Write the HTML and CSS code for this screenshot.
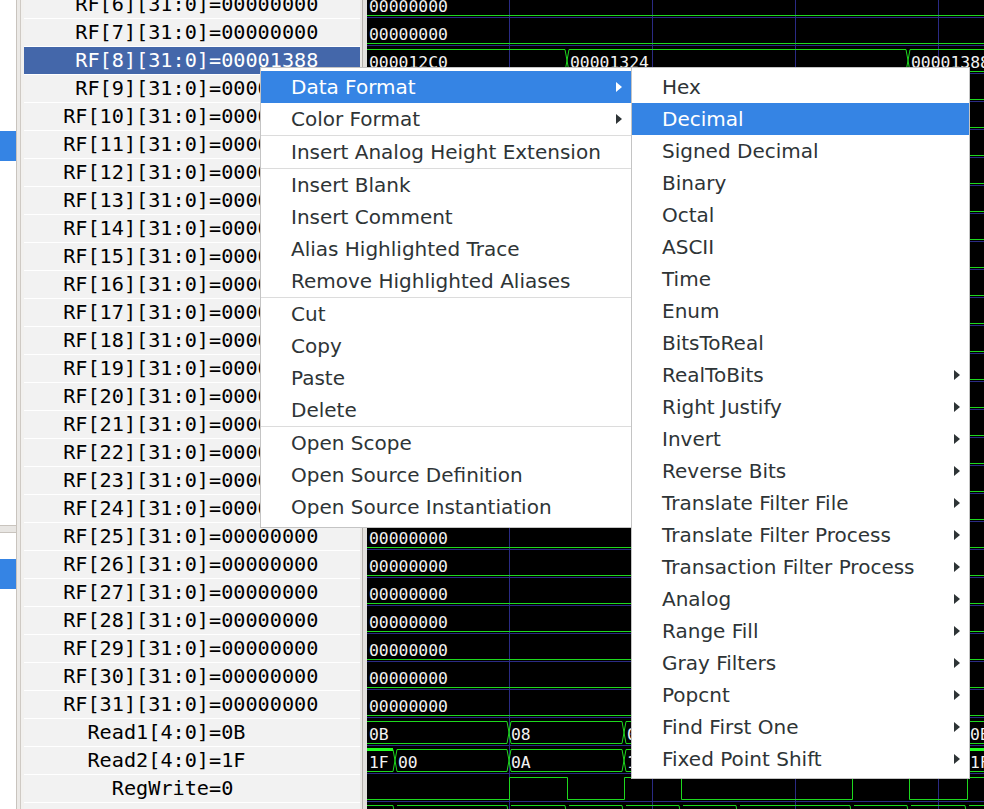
FILE: index.html
```html
<!DOCTYPE html>
<html>
<head>
<meta charset="utf-8">
<link rel="stylesheet" href="styles.css">
</head>
<body>
<div class="app">
  <div class="side">
    <div class="pane pane-top"><div class="sel"></div></div>
    <div class="pane pane-bottom"><div class="sel"></div></div>
  </div>
  <div class="split-a"></div>
  <div class="signals">
    <div class="rows">
      <div class="row"><span class="name">RF[6][31:0]</span><span>=00000000</span></div>
      <div class="row"><span class="name">RF[7][31:0]</span><span>=00000000</span></div>
      <div class="row row-sel"><span class="name">RF[8][31:0]</span><span>=00001388</span></div>
      <div class="row"><span class="name">RF[9][31:0]</span><span>=00000000</span></div>
      <div class="row"><span class="name">RF[10][31:0]</span><span>=00000000</span></div>
      <div class="row"><span class="name">RF[11][31:0]</span><span>=00000000</span></div>
      <div class="row"><span class="name">RF[12][31:0]</span><span>=00000000</span></div>
      <div class="row"><span class="name">RF[13][31:0]</span><span>=00000000</span></div>
      <div class="row"><span class="name">RF[14][31:0]</span><span>=00000000</span></div>
      <div class="row"><span class="name">RF[15][31:0]</span><span>=00000000</span></div>
      <div class="row"><span class="name">RF[16][31:0]</span><span>=00000000</span></div>
      <div class="row"><span class="name">RF[17][31:0]</span><span>=00000000</span></div>
      <div class="row"><span class="name">RF[18][31:0]</span><span>=00000000</span></div>
      <div class="row"><span class="name">RF[19][31:0]</span><span>=00000000</span></div>
      <div class="row"><span class="name">RF[20][31:0]</span><span>=00000000</span></div>
      <div class="row"><span class="name">RF[21][31:0]</span><span>=00000000</span></div>
      <div class="row"><span class="name">RF[22][31:0]</span><span>=00000000</span></div>
      <div class="row"><span class="name">RF[23][31:0]</span><span>=00000000</span></div>
      <div class="row"><span class="name">RF[24][31:0]</span><span>=00000000</span></div>
      <div class="row"><span class="name">RF[25][31:0]</span><span>=00000000</span></div>
      <div class="row"><span class="name">RF[26][31:0]</span><span>=00000000</span></div>
      <div class="row"><span class="name">RF[27][31:0]</span><span>=00000000</span></div>
      <div class="row"><span class="name">RF[28][31:0]</span><span>=00000000</span></div>
      <div class="row"><span class="name">RF[29][31:0]</span><span>=00000000</span></div>
      <div class="row"><span class="name">RF[30][31:0]</span><span>=00000000</span></div>
      <div class="row"><span class="name">RF[31][31:0]</span><span>=00000000</span></div>
      <div class="row"><span class="name">Read1[4:0]</span><span>=0B</span></div>
      <div class="row"><span class="name">Read2[4:0]</span><span>=1F</span></div>
      <div class="row"><span class="name">RegWrite</span><span>=0</span></div>
      <div class="row"><span class="name"></span><span></span></div>
    </div>
  </div>
  <div class="split-b"></div>
  <div class="wave">
    <svg class="wave-svg" width="617" height="809" viewBox="0 0 617 809" xmlns="http://www.w3.org/2000/svg">
      <g class="grid">
        <path d="M142.5 0V809M285.5 0V809M428.5 0V809M571.5 0V809"/>
        <path d="M0 17.5H617M0 45.5H617M0 73.5H617M0 101.5H617M0 129.5H617M0 157.5H617M0 185.5H617M0 213.5H617M0 241.5H617M0 269.5H617M0 297.5H617M0 325.5H617M0 353.5H617M0 381.5H617M0 409.5H617M0 437.5H617M0 465.5H617M0 493.5H617M0 521.5H617M0 549.5H617M0 577.5H617M0 605.5H617M0 633.5H617M0 661.5H617M0 689.5H617M0 717.5H617M0 745.5H617M0 773.5H617M0 801.5H617"/>
      </g>
      <g class="trace">
        <path d="M0 15.5H617M0 43.5H617M0 99.5H617M0 127.5H617M0 155.5H617M0 183.5H617M0 211.5H617M0 239.5H617M0 267.5H617M0 295.5H617M0 323.5H617M0 351.5H617M0 379.5H617M0 407.5H617M0 435.5H617M0 463.5H617M0 491.5H617M0 519.5H617M0 547.5H617M0 575.5H617M0 603.5H617M0 631.5H617M0 659.5H617M0 687.5H617M0 715.5H617"/>
        <path d="M0 49.5H198M0 71.5H198M198 49.5L202 71.5M198 71.5L202 49.5M202 49.5H539M202 71.5H539M539 49.5L543 71.5M539 71.5L543 49.5M543 49.5H617M543 71.5H617"/>
        <path d="M0 721.5H140M0 743.5H140M140 721.5L144 743.5M140 743.5L144 721.5M144 721.5H255M144 743.5H255M255 721.5L259 743.5M255 743.5L259 721.5M259 721.5H598M259 743.5H598M598 721.5L602 743.5M598 743.5L602 721.5M602 721.5H617M602 743.5H617"/>
        <path d="M0 771.5H26M26 749.5L30 771.5M26 771.5L30 749.5M30 749.5H140M30 771.5H140M140 749.5L144 771.5M140 771.5L144 749.5M144 749.5H255M144 771.5H255M255 749.5L259 771.5M255 771.5L259 749.5M259 749.5H598M259 771.5H598M598 749.5L602 771.5M598 771.5L602 749.5M602 771.5H617"/>
        <path d="M0 799.5H142.5V777.5H200.5V799.5H257.5V777.5H314.5V799.5H485.5V777.5H542.5V799.5H600.5V777.5H617"/>
        <path d="M0 805.5H26M26 805.5L30 827.5M30 805.5H140M140 805.5L144 827.5M144 805.5H198M198 805.5L202 827.5M202 805.5H255M255 805.5L259 827.5M259 805.5H312M312 805.5L316 827.5M316 805.5H369M369 805.5L373 827.5M373 805.5H483M483 805.5L487 827.5M487 805.5H540M540 805.5L544 827.5M544 805.5H598M598 805.5L602 827.5M602 805.5H617"/>
      </g>
      <rect class="hi" x="0" y="748" width="26" height="3"/>
      <rect class="hi" x="602" y="748" width="15" height="3"/>
      <g class="vals">
        <text x="2" y="12">00000000</text>
        <text x="2" y="40">00000000</text>
        <text x="2" y="68">000012C0</text>
        <text x="203" y="68">00001324</text>
        <text x="544" y="68">00001388</text>
        <text x="2" y="544">00000000</text>
        <text x="2" y="572">00000000</text>
        <text x="2" y="600">00000000</text>
        <text x="2" y="628">00000000</text>
        <text x="2" y="656">00000000</text>
        <text x="2" y="684">00000000</text>
        <text x="2" y="712">00000000</text>
        <text x="2" y="740">0B</text>
        <text x="144" y="740">08</text>
        <text x="260" y="740">09</text>
        <text x="603" y="740">0E</text>
        <text x="2" y="768">1F</text>
        <text x="31" y="768">00</text>
        <text x="144" y="768">0A</text>
        <text x="260" y="768">13</text>
        <text x="603" y="768">1F</text>
      </g>
    </svg>
  </div>

  <div class="menu menu-main">
    <div class="item hl"><span>Data Format</span><i class="arrow"></i></div>
    <div class="item"><span>Color Format</span><i class="arrow"></i></div>
    <div class="sep"></div>
    <div class="item"><span>Insert Analog Height Extension</span></div>
    <div class="sep"></div>
    <div class="item"><span>Insert Blank</span></div>
    <div class="item"><span>Insert Comment</span></div>
    <div class="item"><span>Alias Highlighted Trace</span></div>
    <div class="item"><span>Remove Highlighted Aliases</span></div>
    <div class="sep"></div>
    <div class="item"><span>Cut</span></div>
    <div class="item"><span>Copy</span></div>
    <div class="item"><span>Paste</span></div>
    <div class="item"><span>Delete</span></div>
    <div class="sep"></div>
    <div class="item"><span>Open Scope</span></div>
    <div class="item"><span>Open Source Definition</span></div>
    <div class="item"><span>Open Source Instantiation</span></div>
  </div>

  <div class="menu menu-sub">
    <div class="item"><span>Hex</span></div>
    <div class="item hl"><span>Decimal</span></div>
    <div class="item"><span>Signed Decimal</span></div>
    <div class="item"><span>Binary</span></div>
    <div class="item"><span>Octal</span></div>
    <div class="item"><span>ASCII</span></div>
    <div class="item"><span>Time</span></div>
    <div class="item"><span>Enum</span></div>
    <div class="item"><span>BitsToReal</span></div>
    <div class="item"><span>RealToBits</span><i class="arrow"></i></div>
    <div class="item"><span>Right Justify</span><i class="arrow"></i></div>
    <div class="item"><span>Invert</span><i class="arrow"></i></div>
    <div class="item"><span>Reverse Bits</span><i class="arrow"></i></div>
    <div class="item"><span>Translate Filter File</span><i class="arrow"></i></div>
    <div class="item"><span>Translate Filter Process</span><i class="arrow"></i></div>
    <div class="item"><span>Transaction Filter Process</span><i class="arrow"></i></div>
    <div class="item"><span>Analog</span><i class="arrow"></i></div>
    <div class="item"><span>Range Fill</span><i class="arrow"></i></div>
    <div class="item"><span>Gray Filters</span><i class="arrow"></i></div>
    <div class="item"><span>Popcnt</span><i class="arrow"></i></div>
    <div class="item"><span>Find First One</span><i class="arrow"></i></div>
    <div class="item"><span>Fixed Point Shift</span><i class="arrow"></i></div>
  </div>
</div>
</body>
</html>
```

FILE: styles.css
```css
html, body {
  margin: 0;
  padding: 0;
}
body {
  width: 984px;
  height: 809px;
  overflow: hidden;
  background: #e8e6e3;
  font-family: "DejaVu Sans", sans-serif;
}
.app {
  position: relative;
  display: flex;
  height: 809px;
}
.side {
  width: 16px;
  border-right: 1px solid #c9c4be;
  display: flex;
  flex-direction: column;
  background: #e8e6e3;
}
.pane {
  background: #fff;
}
.pane-top {
  box-sizing: border-box;
  height: 526px;
  padding-top: 131px;
  border-bottom: 1px solid #c9c4be;
}
.pane-bottom {
  flex: 1;
  margin-top: 6px;
  padding-top: 26px;
  border-top: 1px solid #c9c4be;
}
.sel {
  height: 30px;
  background: #3584e4;
}
.split-a {
  width: 7px;
  box-sizing: border-box;
  border-left: 3px solid #eceae7;
  border-right: 3px solid #f2f1ef;
  background: #cfcac4;
}
.signals {
  width: 336px;
  background: #f2f2f2;
  overflow: hidden;
}
.rows {
  margin-top: -9px;
}
.row {
  display: flex;
  height: 27px;
  border-bottom: 1px solid #ffffff;
  font-family: "DejaVu Sans Mono", monospace;
  font-size: 20.2px;
  line-height: 27px;
  color: #000;
  white-space: pre;
}
.name {
  width: 185px;
  text-align: right;
}
.row-sel {
  background: #4467aa;
  color: #fff;
}
.split-b {
  width: 7px;
  box-sizing: border-box;
  border-left: 2px solid #ebe9e6;
  border-right: 4px solid #e2e0dc;
  background: #b3afaa;
}
.wave {
  flex: 1;
  background: #000;
  overflow: hidden;
}
.wave-svg {
  display: block;
}
.grid path {
  stroke: #2a2a84;
  stroke-width: 1;
  fill: none;
}
.trace path {
  stroke: #1ed81e;
  stroke-width: 1;
  fill: none;
}
.hi {
  fill: #22ff22;
}
.vals text {
  font-family: "DejaVu Sans Mono", monospace;
  font-size: 16.4px;
  fill: #f2f2f2;
}
.menu {
  position: absolute;
  top: 67px;
  box-sizing: border-box;
  background: #fff;
  border: 1px solid #c4c4c4;
  font-family: "DejaVu Sans", sans-serif;
  font-size: 20px;
  color: #2e3436;
}
.menu-main {
  left: 260px;
  width: 372px;
  padding: 3px 0 4px;
}
.menu-sub {
  left: 631px;
  width: 339px;
  padding: 3px 0 3px;
}
.item {
  height: 32px;
  display: flex;
  align-items: center;
  justify-content: space-between;
  padding: 0 9px 0 30px;
  white-space: nowrap;
}
.item.hl {
  background: #3584e4;
  color: #fff;
}
.sep {
  height: 1px;
  background: #dcdcdc;
}
.arrow {
  display: block;
  width: 0;
  height: 0;
  border-left: 6px solid currentColor;
  border-top: 5px solid transparent;
  border-bottom: 5px solid transparent;
}
```
